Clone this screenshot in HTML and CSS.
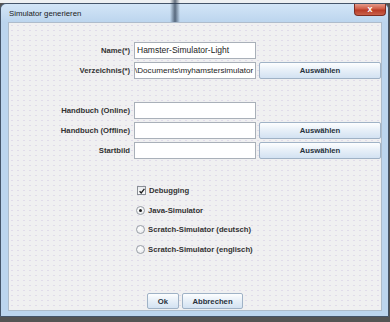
FILE: index.html
```html
<!DOCTYPE html>
<html>
<head>
<meta charset="utf-8">
<title>Simulator generieren</title>
<link rel="stylesheet" href="styles.css">
</head>
<body>

<div class="streak"></div>

<div class="window">
  <div class="titlebar">
    <span class="title">Simulator generieren</span>
    <span class="close">x</span>
  </div>

  <div class="client">

    <div class="form">
      <label class="lbl">Name(*)</label>
      <div class="field">Hamster-Simulator-Light</div>
      <div></div>

      <label class="lbl">Verzeichnis(*)</label>
      <div class="field path">\Documents\myhamstersimulator</div>
      <button class="btn">Auswählen</button>

      <div></div><div></div><div></div>

      <label class="lbl">Handbuch (Online)</label>
      <div class="field"></div>
      <div></div>

      <label class="lbl">Handbuch (Offline)</label>
      <div class="field"></div>
      <button class="btn">Auswählen</button>

      <label class="lbl">Startbild</label>
      <div class="field"></div>
      <button class="btn">Auswählen</button>
    </div>

    <div class="options">
      <div class="opt">
        <span class="check">
          <svg width="6" height="6" viewBox="0 0 6 6"><path d="M0.6 3.2 L2.2 4.9 L5.4 0.8" fill="none" stroke="#1d1d1d" stroke-width="1.3"/></svg>
        </span>
        Debugging
      </div>
      <div class="opt"><span class="radio on"></span>Java-Simulator</div>
      <div class="opt"><span class="radio"></span>Scratch-Simulator (deutsch)</div>
      <div class="opt"><span class="radio"></span>Scratch-Simulator (englisch)</div>
    </div>

    <div class="actions">
      <button class="btn ok">Ok</button>
      <button class="btn cancel">Abbrechen</button>
    </div>

  </div>
</div>

</body>
</html>
```

FILE: styles.css
```css
body {
  margin: 0;
  font-family: "Liberation Sans", Arial, sans-serif;
  background: linear-gradient(#eef0f2 0, #eef0f2 3px, #545454 3px);
  height: 322px;
  overflow: hidden;
}

.streak {
  position: absolute;
  left: 170px;
  top: 0;
  width: 10px;
  height: 22px;
  background: linear-gradient(to right, rgba(60,80,100,0), rgba(40,55,75,.7) 50%, rgba(60,80,100,0));
}

.window {
  margin-top: 3px;
  width: 387px;
  height: 312px;
  border: 1px solid #45556a;
  border-radius: 6px 6px 0 0;
  background: #bcd5ee;
  display: flex;
  flex-direction: column;
}

.titlebar {
  height: 18px;
  display: flex;
  align-items: flex-start;
  justify-content: space-between;
  background: linear-gradient(#d3e5f7, #bcd5ee);
  border-radius: 6px 6px 0 0;
}

.title {
  font-size: 7.8px;
  color: #1a1a1a;
  margin: 5px 0 0 8px;
}

.close {
  width: 30px;
  height: 11px;
  margin-right: 2px;
  border: 1px solid #7d2c22;
  border-top: 0;
  border-radius: 0 0 4px 4px;
  background: linear-gradient(#e59a8a, #cf5a44 45%, #b83a26 55%, #c9614a);
  color: #fff;
  font-size: 9px;
  font-weight: bold;
  line-height: 10px;
  text-align: center;
}

.client {
  margin: 0 6px 5px 7px;
  height: 287px;
  border: 1px solid #aebccb;
  background-color: #f0f0f1;
  background-image: radial-gradient(circle, #e0dbea 0.6px, transparent 0.8px);
  background-size: 6px 5px;
  display: flex;
  flex-direction: column;
}

.form {
  display: grid;
  grid-template-columns: 122px 122px 122px;
  grid-auto-rows: 17px;
  column-gap: 3px;
  row-gap: 3px;
  padding-top: 19px;
}

.lbl {
  font-size: 7.7px;
  font-weight: bold;
  color: #333;
  text-align: right;
  line-height: 17px;
  padding-right: 1px;
}

.field {
  box-sizing: border-box;
  height: 17px;
  border: 1px solid #a9b0b9;
  background: #fff;
  font-size: 8.5px;
  color: #1c1c1c;
  line-height: 15px;
  padding-left: 2px;
  white-space: nowrap;
  overflow: hidden;
}

.path {
  font-size: 8.1px;
  padding-left: 0;
}

.btn {
  box-sizing: border-box;
  height: 17px;
  margin: 0;
  padding: 0;
  border: 1px solid #9fb2c6;
  border-radius: 2px;
  background: linear-gradient(#fdfeff, #e8f0f8 45%, #d3e2f2);
  font-family: "Liberation Sans", Arial, sans-serif;
  font-size: 7.7px;
  font-weight: bold;
  color: #27313c;
}

.options {
  margin-top: 22px;
  padding-left: 127px;
}

.opt {
  height: 19.5px;
  display: flex;
  align-items: center;
  font-size: 7.7px;
  font-weight: bold;
  color: #333;
}

.check {
  box-sizing: border-box;
  width: 9px;
  height: 9px;
  margin: 0 3px 0 1px;
  border: 1px solid #8a8f96;
  background: linear-gradient(#e9ebee, #fbfbfc);
  display: flex;
  align-items: center;
  justify-content: center;
}

.radio {
  box-sizing: border-box;
  width: 9px;
  height: 9px;
  margin: 0 3px 0 0;
  border: 1px solid #989ea6;
  border-radius: 50%;
  background: radial-gradient(circle at 40% 35%, #fff, #e3e5e9);
  display: flex;
  align-items: center;
  justify-content: center;
}

.radio.on::after {
  content: "";
  width: 3px;
  height: 3px;
  border-radius: 50%;
  background: #1f1f1f;
}

.actions {
  margin-top: auto;
  margin-bottom: 1px;
  display: flex;
  justify-content: center;
  gap: 3px;
}

.actions .btn {
  height: 16px;
}

.ok { width: 32px; }
.cancel { width: 61px; }
```
